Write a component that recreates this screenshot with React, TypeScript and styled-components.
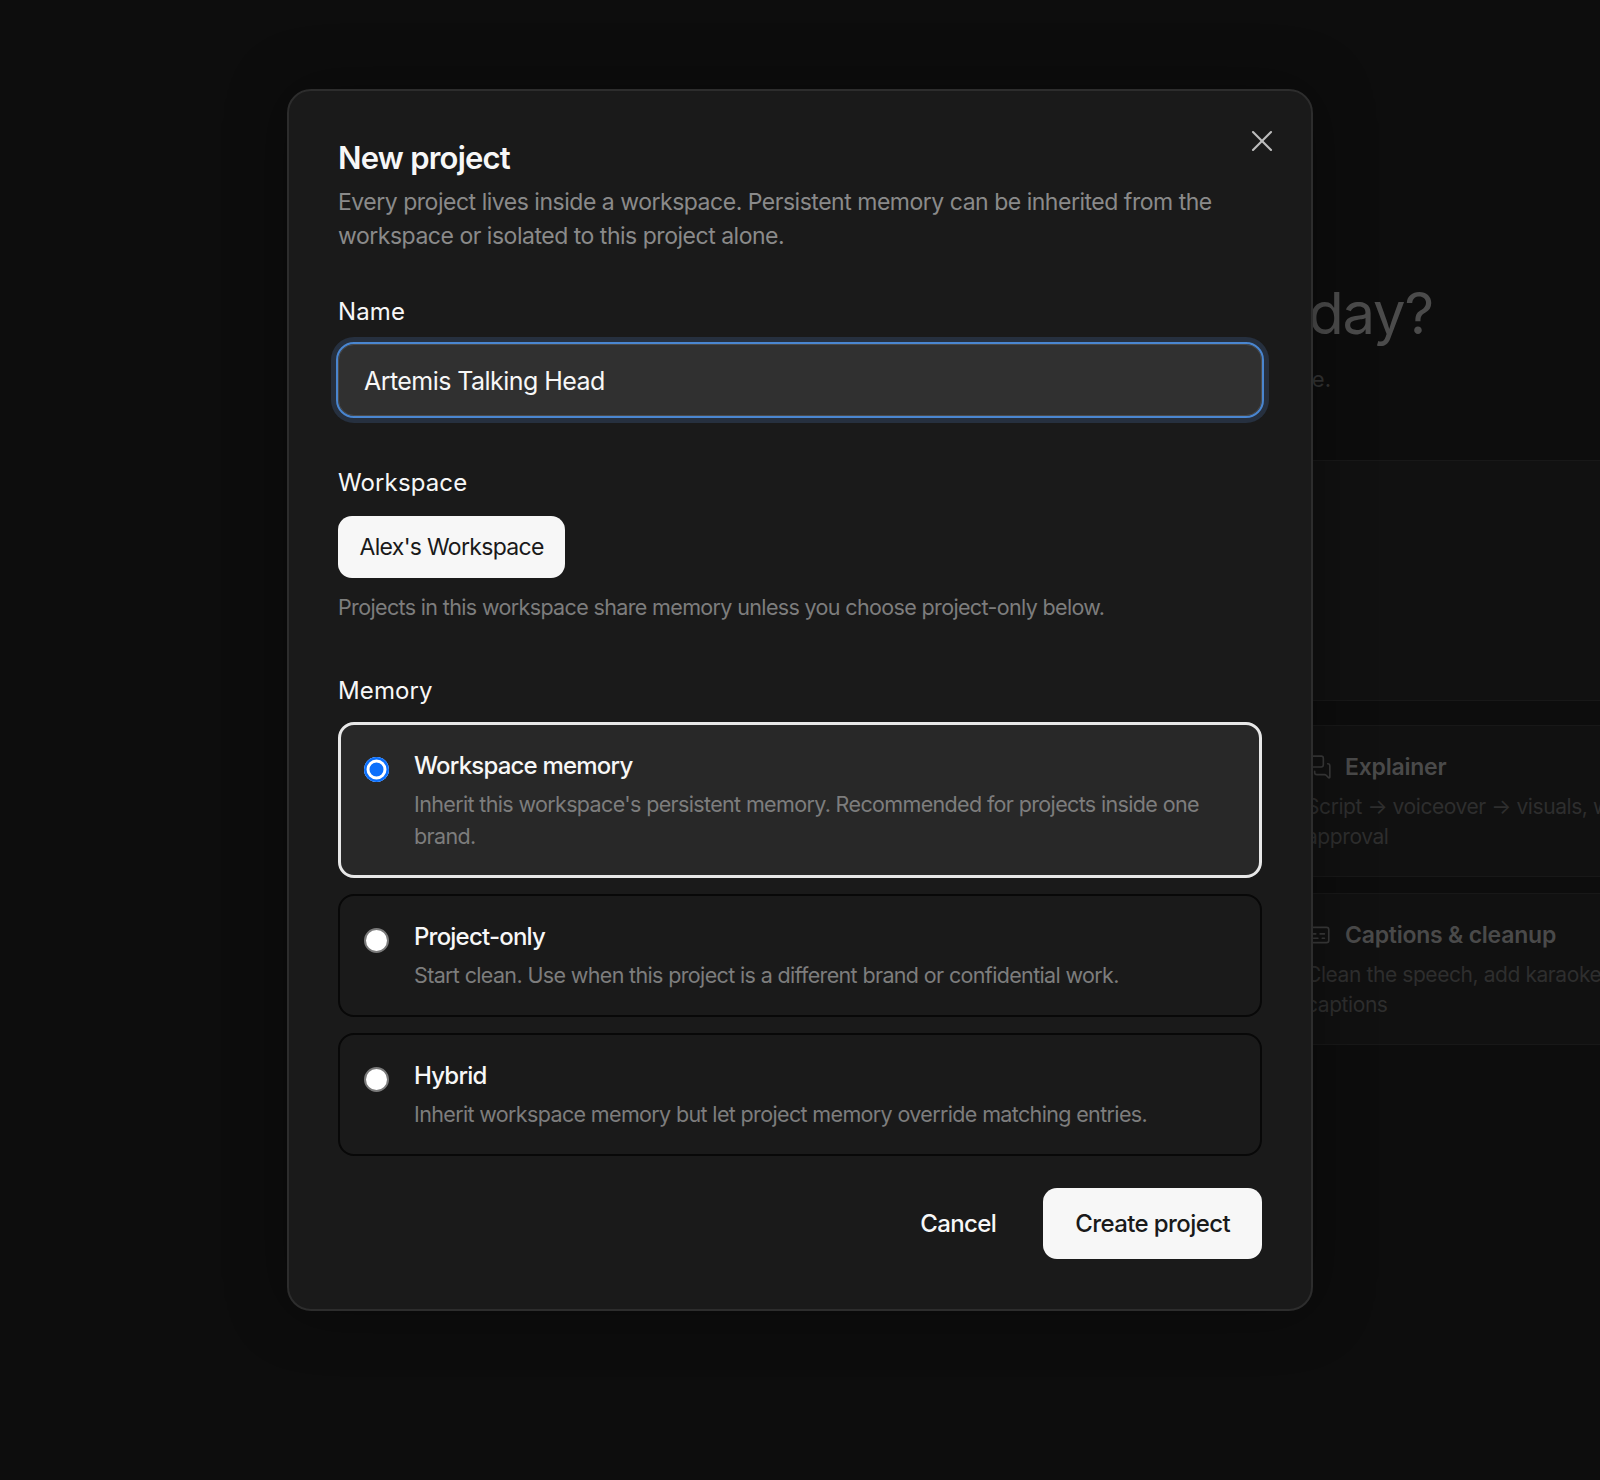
import React from 'react';
import styled, { createGlobalStyle } from 'styled-components';
import { Captions, MessagesSquare, X } from 'lucide-react';

const GlobalStyle = createGlobalStyle`
  html, body {
    margin: 0;
    background: #0d0d0d;
  }

  body {
    font-family: Inter, "Liberation Sans", sans-serif;
    -webkit-font-smoothing: antialiased;
  }
`;

const Page = styled.div`
  position: relative;
  width: 1600px;
  height: 1480px;
  overflow: hidden;
  background: #0d0d0d;
`;

const Backdrop = styled.main`
  display: flex;
  flex-direction: column;
  padding: 279px 0 0 1281px;
`;

const Hero = styled.header`
  display: flex;
  flex-direction: column;
  align-items: flex-end;
  height: 181px;
`;

const HeroTitle = styled.h1`
  margin: 0 167px 0 0;
  font-size: 58px;
  font-weight: 400;
  line-height: 68px;
  letter-spacing: -0.02em;
  white-space: nowrap;
  color: #4b4b4b;
`;

const HeroText = styled.p`
  margin: 17px 269px 0 0;
  font-size: 22px;
  line-height: 30px;
  white-space: nowrap;
  color: #333;
`;

const Panel = styled.section`
  box-sizing: border-box;
  height: 241px;
  margin-bottom: 24px;
  background: #111;
  border-top: 1px solid #181818;
  border-bottom: 1px solid #181818;
`;

const TemplateList = styled.div`
  display: flex;
  flex-direction: column;
  gap: 16px;
`;

const Template = styled.article`
  box-sizing: border-box;
  height: 152px;
  padding: 25px 0 0 25px;
  background: #111;
  border-top: 1px solid #181818;
  border-bottom: 1px solid #181818;
`;

const TemplateHead = styled.div`
  display: flex;
  align-items: center;
  gap: 13px;
  color: #3a3a3a;
`;

const TemplateName = styled.h3`
  margin: 0;
  font-size: 23px;
  font-weight: 600;
  line-height: 32px;
  letter-spacing: -0.01em;
  color: #4a4a4a;
`;

const TemplateText = styled.p`
  width: 345px;
  margin: 9px 0 0;
  font-size: 21px;
  line-height: 30px;
  letter-spacing: -0.02em;
  color: #2e2e2e;
`;

const Dialog = styled.div`
  position: absolute;
  top: 89px;
  left: 287px;
  box-sizing: border-box;
  width: 1026px;
  height: 1222px;
  padding: 49px 49px 48px;
  background: #1a1a1a;
  border: 2px solid #2d2d2d;
  border-radius: 24px;
  box-shadow: 0 0 60px rgba(0, 0, 0, 0.35);
`;

const CloseButton = styled.button`
  position: absolute;
  top: 32px;
  right: 31px;
  display: flex;
  padding: 0;
  background: none;
  border: 0;
  color: #bdbdbd;
`;

const Title = styled.h2`
  margin: 0;
  font-size: 31px;
  font-weight: 600;
  line-height: 36px;
  letter-spacing: -0.025em;
  color: #f7f7f7;
`;

const Description = styled.p`
  margin: 9px 0 0;
  font-size: 23px;
  line-height: 34px;
  letter-spacing: -0.021em;
  color: #8a8a8a;
`;

const Field = styled.div<{ $gap: number }>`
  margin-top: ${({ $gap }) => $gap}px;
`;

const Label = styled.label<{ $space: number }>`
  display: block;
  margin-bottom: ${({ $space }) => $space}px;
  font-size: 24px;
  line-height: 34px;
  letter-spacing: 0.005em;
  color: #f7f7f7;
`;

const NameInput = styled.input`
  display: block;
  box-sizing: border-box;
  width: 100%;
  height: 72px;
  padding: 2px 25px 0;
  font-family: inherit;
  font-size: 25px;
  letter-spacing: -0.022em;
  color: #f7f7f7;
  background: #303030;
  border: 1px solid #4a4a4a;
  border-radius: 16px;
  outline: 2px solid #4a86d0;
  outline-offset: 0;
  box-shadow: 0 0 0 7px #26303f;
`;

const WorkspaceChip = styled.button`
  display: block;
  height: 62px;
  padding: 0 21.5px;
  font-family: inherit;
  font-size: 23px;
  letter-spacing: -0.03em;
  color: #1a1a1a;
  background: #f7f7f7;
  border: 0;
  border-radius: 14px;
`;

const Hint = styled.p`
  margin: 13px 0 0;
  font-size: 21.5px;
  line-height: 32px;
  letter-spacing: -0.03em;
  color: #7d7d7d;
`;

const Options = styled.div`
  display: flex;
  flex-direction: column;
  gap: 16px;
`;

const Option = styled.label<{ $selected?: boolean }>`
  display: flex;
  gap: 25px;
  padding: ${({ $selected }) => ($selected ? '24px 23px 23px' : '24px')};
  background: ${({ $selected }) => ($selected ? '#282828' : '#1a1a1a')};
  border: ${({ $selected }) => ($selected ? '3px solid #e8e8e8' : '2px solid #080808')};
  border-radius: 16px;
`;

const Radio = styled.input`
  flex: none;
  box-sizing: border-box;
  width: 25px;
  height: 25px;
  margin: 8px 0 0;
  appearance: none;
  background: #fff;
  border: 2px solid #7a7a7a;
  border-radius: 50%;

  &:checked {
    background: #0b6ffb;
    border: 0;
    box-shadow: inset 0 0 0 2.5px #0b6ffb, inset 0 0 0 5.5px #fff;
  }
`;

const OptionBody = styled.div`
  display: flex;
  flex-direction: column;
  gap: 5px;
`;

const OptionName = styled.span`
  font-size: 24px;
  font-weight: 500;
  line-height: 34px;
  letter-spacing: -0.033em;
  color: #f7f7f7;
`;

const OptionText = styled.span`
  font-size: 21.5px;
  line-height: 32px;
  letter-spacing: -0.03em;
  color: #7d7d7d;
`;

const Actions = styled.footer`
  display: flex;
  justify-content: flex-end;
  align-items: center;
  gap: 47px;
  margin-top: 32px;
`;

const CancelButton = styled.button`
  padding: 0;
  font-family: inherit;
  font-size: 24px;
  font-weight: 500;
  letter-spacing: -0.025em;
  color: #f7f7f7;
  background: none;
  border: 0;
`;

const CreateButton = styled.button`
  height: 71px;
  padding: 0 32px;
  font-family: inherit;
  font-size: 24px;
  font-weight: 500;
  letter-spacing: -0.025em;
  color: #1a1a1a;
  background: #f7f7f7;
  border: 0;
  border-radius: 14px;
`;

const templates = [
  { name: 'Explainer', text: 'Script → voiceover → visuals, with approval', icon: MessagesSquare },
  { name: 'Captions & cleanup', text: 'Clean the speech, add karaoke captions', icon: Captions },
];

const memoryOptions = [
  {
    name: 'Workspace memory',
    text: "Inherit this workspace's persistent memory. Recommended for projects inside one brand.",
    selected: true,
  },
  {
    name: 'Project-only',
    text: 'Start clean. Use when this project is a different brand or confidential work.',
  },
  {
    name: 'Hybrid',
    text: 'Inherit workspace memory but let project memory override matching entries.',
  },
];

export default function App() {
  return (
    <Page>
      <GlobalStyle />
      <Backdrop>
        <Hero>
          <HeroTitle>What will you make today?</HeroTitle>
          <HeroText>Describe it or start from a template.</HeroText>
        </Hero>
        <Panel />
        <TemplateList>
          {templates.map(({ name, text, icon: Icon }) => (
            <Template key={name}>
              <TemplateHead>
                <Icon size={26} strokeWidth={1.5} />
                <TemplateName>{name}</TemplateName>
              </TemplateHead>
              <TemplateText>{text}</TemplateText>
            </Template>
          ))}
        </TemplateList>
      </Backdrop>

      <Dialog>
        <CloseButton aria-label="Close">
          <X size={36} strokeWidth={1.4} />
        </CloseButton>
        <Title>New project</Title>
        <Description>
          Every project lives inside a workspace. Persistent memory can be inherited from the
          workspace or isolated to this project alone.
        </Description>

        <Field $gap={42}>
          <Label $space={15}>Name</Label>
          <NameInput defaultValue="Artemis Talking Head" />
        </Field>

        <Field $gap={50}>
          <Label $space={16}>Workspace</Label>
          <WorkspaceChip>Alex's Workspace</WorkspaceChip>
          <Hint>Projects in this workspace share memory unless you choose project-only below.</Hint>
        </Field>

        <Field $gap={51}>
          <Label $space={14}>Memory</Label>
          <Options>
            {memoryOptions.map(({ name, text, selected }) => (
              <Option key={name} $selected={selected}>
                <Radio type="radio" name="memory" defaultChecked={selected} />
                <OptionBody>
                  <OptionName>{name}</OptionName>
                  <OptionText>{text}</OptionText>
                </OptionBody>
              </Option>
            ))}
          </Options>
        </Field>

        <Actions>
          <CancelButton>Cancel</CancelButton>
          <CreateButton>Create project</CreateButton>
        </Actions>
      </Dialog>
    </Page>
  );
}
